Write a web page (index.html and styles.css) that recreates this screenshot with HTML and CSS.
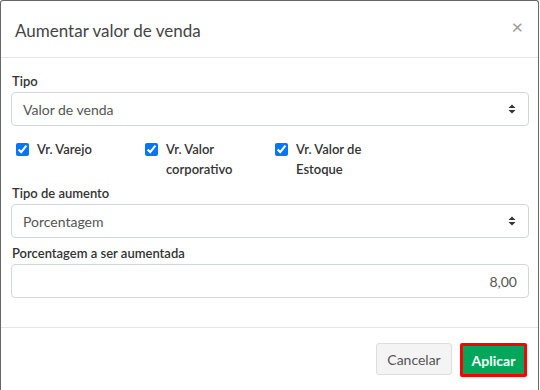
FILE: index.html
```html
<!DOCTYPE html>
<html>
<head>
<meta charset="utf-8">
<link rel="stylesheet" href="styles.css">
</head>
<body>
<div class="modal">
  <div class="modal-header">
    <h4 class="modal-title">Aumentar valor de venda</h4>
    <span class="close">×</span>
  </div>
  <div class="modal-body">
    <div class="group">
      <label class="lbl">Tipo</label>
      <div class="select">
        <span>Valor de venda</span>
        <svg class="arrows" width="8" height="10" viewBox="0 0 8 10"><path d="M4 0.5 L7.5 4 L0.5 4 Z M4 9.5 L7.5 6 L0.5 6 Z" fill="#333"/></svg>
      </div>
    </div>
    <div class="checks">
      <label class="check"><input type="checkbox" checked><span>Vr. Varejo</span></label>
      <label class="check"><input type="checkbox" checked><span>Vr. Valor corporativo</span></label>
      <label class="check"><input type="checkbox" checked><span>Vr. Valor de Estoque</span></label>
    </div>
    <div class="group">
      <label class="lbl">Tipo de aumento</label>
      <div class="select">
        <span>Porcentagem</span>
        <svg class="arrows" width="8" height="10" viewBox="0 0 8 10"><path d="M4 0.5 L7.5 4 L0.5 4 Z M4 9.5 L7.5 6 L0.5 6 Z" fill="#333"/></svg>
      </div>
    </div>
    <div class="group">
      <label class="lbl">Porcentagem a ser aumentada</label>
      <div class="input">8,00</div>
    </div>
  </div>
  <div class="modal-footer">
    <button class="btn btn-default">Cancelar</button>
    <button class="btn btn-success">Aplicar</button>
  </div>
</div>
</body>
</html>
```

FILE: styles.css
```css
html, body {
  margin: 0;
  padding: 0;
  background: #fff;
}
body {
  font-family: Lato, "Open Sans", sans-serif;
  color: #333;
}
.modal {
  width: 537px;
  height: 400px;
  border: 1px solid #666;
  border-bottom: none;
  border-radius: 3px 3px 0 0;
  background: #fff;
}
.modal-header {
  height: 56px;
  border-bottom: 1px solid #e5e5e5;
  display: flex;
  align-items: center;
  justify-content: space-between;
  padding: 0 15px 0 14px;
}
.modal-title {
  margin: 3px 0 0 0;
  font-size: 17px;
  font-weight: 400;
  color: #444;
}
.close {
  font-size: 20px;
  color: #999;
  line-height: 1;
  margin-top: -6px;
}
.modal-body {
  padding: 14px 9px 0 10px;
  height: 255px;
  border-bottom: 1px solid #e5e5e5;
}
.group {
  display: flex;
  flex-direction: column;
  margin-bottom: 6px;
}
.lbl {
  font-size: 13px;
  font-weight: 600;
  line-height: 18px;
  margin-bottom: 2px;
  margin-left: 1px;
  color: #333;
}
.select, .input {
  height: 32px;
  border: 1px solid #d2d6de;
  border-radius: 4px;
  display: flex;
  align-items: center;
  padding: 0 11px;
  font-size: 14px;
  color: #555;
}
.select {
  justify-content: space-between;
}
.arrows {
  margin-right: 1px;
}
.input {
  justify-content: flex-end;
}
.checks {
  display: grid;
  grid-template-columns: 129px 130px 130px;
  padding: 7px 0 0 5px;
  margin-bottom: 5px;
}
.check {
  display: flex;
  align-items: flex-start;
  font-size: 13px;
  font-weight: 600;
  line-height: 20px;
  color: #333;
}
.check input {
  width: 13px;
  height: 13px;
  margin: 4px 8px 0 0;
  accent-color: #0075ff;
}
.check span {
  max-width: 80px;
}
.modal-footer {
  display: flex;
  justify-content: flex-end;
  align-items: flex-start;
  gap: 8px;
  padding: 15px 11px 0 0;
}
.btn {
  font-family: Lato, "Open Sans", sans-serif;
  font-size: 14px;
  border-radius: 3px;
  cursor: pointer;
}
.btn-default {
  width: 76px;
  height: 32px;
  background: #f4f4f4;
  border: 1px solid #ddd;
  color: #555;
}
.btn-success {
  width: 67px;
  height: 34px;
  background: #00a65a;
  border: 3px solid #ff0000;
  color: #fff;
  font-weight: 700;
  border-radius: 2px;
}
```
